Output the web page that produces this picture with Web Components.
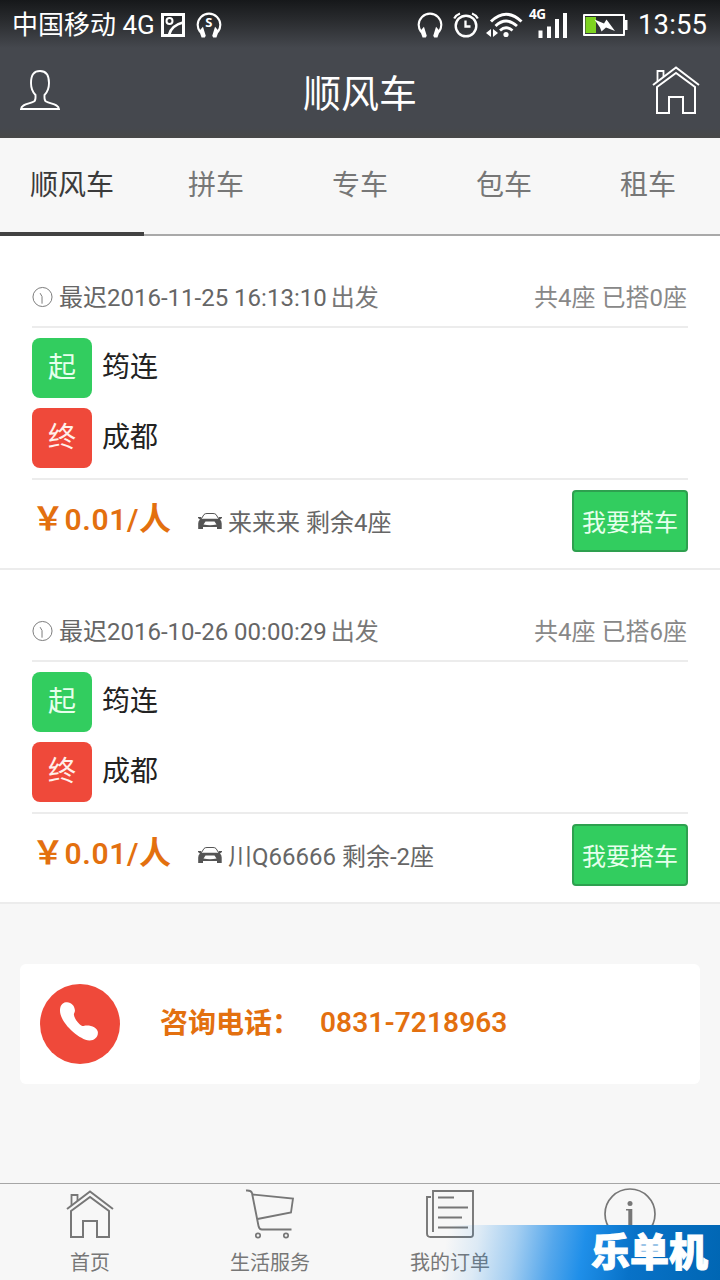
<!DOCTYPE html>
<html lang="zh-CN">
<head>
<meta charset="utf-8">
<title>顺风车</title>
<style>
  body {
    margin: 0;
    width: 720px;
    height: 1280px;
    overflow: hidden;
    font-family: Roboto, "Noto Sans CJK SC", sans-serif;
    background: #f7f7f7;
    color: #333;
  }
</style>
</head>
<body>
<ride-app></ride-app>

<script>
// [viewBox width, viewBox height, markup]
const ICONS = {
  picture: [24, 24, `<path d="M1.500 1.500h21v21h-21z" stroke-width="3"/><circle cx="8.500" cy="8" r="3" stroke-width="2"/><path d="M8 22Q10 12.500 22 9.500" stroke-width="2.800"/>`],
  headset: [28, 28, `<path d="M4.500 21.500C2.500 19 1.800 16.500 1.800 13.800a12.200 12 0 0 1 24.400 0c0 2.700-.7 5.200-2.700 7.700" stroke-width="2.300"/><path d="M3.500 20.500l4-4.500 3 9.500-1 2H6zM24.500 20.500l-4-4.500-3 9.500 1 2H22z" fill="currentColor" stroke="none"/>`],
  alarm: [26, 26, `<circle cx="13" cy="14" r="10.300" stroke-width="2.400"/><path d="M12.500 8.500v6h5" stroke-width="2.300"/><path d="M1.200 6.500Q3 3 7 1.500M24.800 6.500Q23 3 19 1.500" stroke-width="2.200"/>`],
  wifi: [37, 26, `<path d="M5 9.500Q20-5 35.500 9.500" stroke-width="3"/><path d="M9.500 14Q20 4 31 14M14 18.500q6-5.500 12.500 0" stroke-width="2.800"/><circle cx="20" cy="22.500" r="2.600" fill="currentColor" stroke="none"/><path d="M5 17v8L0 21zM7 17v8l5-4z" fill="currentColor" stroke="none"/>`],
  signal: [30, 26, `<path d="M2.500 18.500V26M11 14.500V26M19 7v19M27 1v25" stroke-width="4"/>`],
  battery: [46, 24, `<path d="M2 2h40v20H2z" stroke-width="2" stroke-linejoin="round"/><path d="M42.500 7h3v10h-3z" fill="currentColor" stroke="none"/><path d="M3.500 4H14v16H3.500z" fill="#7ed321" stroke="none"/><path d="M12.500 6.500l9.500 4 2.500-4L33 18l-9-3.500-4.500 4-1.500-4z" fill="currentColor" stroke="none"/>`],
  user: [40, 40, `<path d="M1 39C1.500 34 9 34 14 31.500c2-1 1.500-4 1.500-6.500-4-4-4.500-8-4.500-12C11 4.500 14 1 20 1s9 3.500 9 12c0 4-.5 8-4.500 12 0 2.500-.5 5.500 1.500 6.500C31 34 38.500 34 39 39z" stroke-width="1.900"/>`],
  home: [48, 50, `<path d="M1 20L24 2.500 47 20" stroke-width="2"/><path d="M5.500 16V6h6v6" stroke-width="1.800"/><path d="M5 22L24 8l19 14v26H31V32H17v16H5z" stroke-width="2"/>`],
  clock: [22, 22, `<circle cx="11" cy="11" r="10" stroke-width="1"/><path d="M8.500 7l2 3.500V18" stroke-width="1"/>`],
  car: [26, 18, `<path d="M4.500 6.500L7 2.500Q8 1.500 10 1.500h6q2 0 3 1l2.500 4" stroke-width="1"/><path d="M1 5h3l1 1.800h16L22 5h3v1l-2 1.500q1.700 1.500 1.700 4V17H20v-2H6v2H1.200v-5.500q0-2.500 1.700-4L1 6z" fill="currentColor" stroke="none"/><path d="M8.500 9.500h9l2 3q-6.500 1.500-13 0z" fill="#fff" stroke="none"/>`],
  phone: [40, 40, `<path d="M6 .3C11-.5 15 3.500 15.300 8.500c.2 2-1.300 3-1 4.500.2 3.500 4.500 9.500 8 11.300 1.500.7 2.700-.3 4.700-.3C33 23.800 38 26.500 38.800 30.500 39.500 36 35 39.800 30 39.500 19 38.500 0 21 0 9 0 4 2 1 6 .3z" fill="currentColor" stroke="none"/>`],
  cart: [52, 50, `<path d="M2 1.500q5-.5 6 2.500l6.500 33q.7 3.500 3.500 3.500h29.500" stroke-width="1.900"/><path d="M8.500 5.500L49 9.500l-2 14L13.500 30" stroke-width="1.800"/><circle cx="14" cy="46.500" r="2.200" stroke-width="1.700"/><circle cx="42" cy="46.500" r="2.200" stroke-width="1.700"/>`],
  orders: [50, 50, `<path d="M8 43V2h40v43.500q0 2.500-2.500 2.500h-40q-3.500 0-3.500-3.500V8h4" stroke-width="1.900"/><path d="M13 8.500h16M13 18.500h30M13 28.500h24M13 38.500h30" stroke-width="1.900"/>`],
  info: [52, 52, `<circle cx="26" cy="26" r="25" stroke-width="1.700"/><circle cx="26" cy="15.500" r="2.500" fill="currentColor" stroke="none"/><path d="M22 21h6.300v20h-4V22.500H22z" fill="currentColor" stroke="none"/>`]
};

class RideIcon extends HTMLElement {
  constructor() {
    super();
    this.attachShadow({ mode: "open" });
  }

  connectedCallback() {
    const [w, h, shapes] = ICONS[this.getAttribute("name")];
    this.shadowRoot.innerHTML = `
      <style>
        :host { display: block; flex: none; }
        svg { display: block; width: 100%; height: 100%; }
      </style>
      <svg viewBox="0 0 ${w} ${h}" fill="none" stroke="currentColor">${shapes}</svg>
    `;
  }
}

class StatusBar extends HTMLElement {
  connectedCallback() {
    this.attachShadow({ mode: "open" }).innerHTML = `
      <style>
        :host {
          display: flex;
          align-items: center;
          height: 50px;
          padding: 0 13px 0 12px;
          color: #fff;
          font-size: 26px;
          line-height: 52px;
        }
        .space { flex: 1; }
        ride-icon { width: 26px; height: 26px; }
        .music { display: grid; margin-left: 11px; }
        .music > * { grid-area: 1 / 1; }
        .music span { font: bold 13px/20px "Noto Sans", sans-serif; text-align: center; }
        .net { font: bold 13.500px/14px "Noto Sans", sans-serif; align-self: start; margin: 7px 0 0 6px; width: 18px; letter-spacing: -.4px; }
        .time { font-size: 27.500px; margin-left: 10px; line-height: 52px; letter-spacing: .1px; }
      </style>
      <span>中国移动 4G</span>
      <ride-icon name="picture" style="width:24px;height:24px;margin-left:6px"></ride-icon>
      <div class="music"><ride-icon name="headset"></ride-icon><span>S</span></div>
      <div class="space"></div>
      <ride-icon name="headset"></ride-icon>
      <ride-icon name="alarm" style="margin-left:10px"></ride-icon>
      <ride-icon name="wifi" style="width:37px;margin-left:7px"></ride-icon>
      <span class="net">4G</span>
      <ride-icon name="signal" style="width:30px;margin-left:-9px"></ride-icon>
      <ride-icon name="battery" style="width:46px;height:24px;margin-left:14px"></ride-icon>
      <span class="time">13:55</span>
    `;
  }
}

class TitleBar extends HTMLElement {
  connectedCallback() {
    this.attachShadow({ mode: "open" }).innerHTML = `
      <style>
        :host {
          display: flex;
          align-items: center;
          justify-content: space-between;
          height: 88px;
          padding: 0 20px;
          box-sizing: border-box;
          color: #fff;
        }
        h1 { margin: 0; font-size: 38px; font-weight: 400; line-height: 84px; }
        .user { width: 40px; height: 40px; margin: -8px 8px 0 0; }
        .home { width: 48px; height: 50px; margin-top: -9px; }
      </style>
      <ride-icon class="user" name="user"></ride-icon>
      <h1><slot></slot></h1>
      <ride-icon class="home" name="home"></ride-icon>
    `;
  }
}

class RideTabs extends HTMLElement {
  connectedCallback() {
    const tabs = this.getAttribute("items").split(",");
    this.attachShadow({ mode: "open" }).innerHTML = `
      <style>
        :host {
          display: grid;
          grid-template-columns: repeat(5, 1fr);
          height: 98px;
          background: #f7f7f7;
        }
        span {
          box-sizing: border-box;
          border-bottom: 2px solid #a9a9a9;
          color: #777;
          font-size: 28px;
          line-height: 95px;
          height: 98px;
          text-align: center;
        }
        .active { color: #3b3b3b; border-bottom: 4px solid #424242; }
      </style>
      ${tabs.map((t, i) => `<span class="${i === 0 ? "active" : ""}">${t}</span>`).join("")}
    `;
  }
}

class RideCard extends HTMLElement {
  connectedCallback() {
    const get = (name) => this.getAttribute(name);
    this.attachShadow({ mode: "open" }).innerHTML = `
      <style>
        :host {
          display: block;
          height: 334px;
          box-sizing: border-box;
          padding: 30px 32px 0;
          background: #fff;
          border-bottom: 2px solid #ececec;
        }
        .head {
          display: flex;
          align-items: center;
          height: 62px;
          box-sizing: border-box;
          padding: 4px 1px 0 0;
          border-bottom: 2px solid #ececec;
          font-size: 24px;
          line-height: 56px;
          color: #666;
        }
        .head ride-icon { width: 21px; height: 22px; margin: -3px 6px 0 0; color: #777; }
        .head .go { margin-left: 4px; color: #777; flex: 1; }
        .head .seats { color: #888; }
        .route {
          display: grid;
          gap: 10px;
          padding: 10px 0;
          border-bottom: 2px solid #ececec;
          font-size: 28px;
          line-height: 60px;
          color: #222;
        }
        .route div { display: flex; gap: 10px; height: 60px; }
        .route b {
          width: 60px;
          height: 60px;
          border-radius: 8px;
          background: #32cd5f;
          color: #e6ffec;
          font-weight: 400;
          text-align: center;
        }
        .route .end b { background: #ef493a; color: #fff0ea; }
        .foot { display: flex; align-items: center; height: 82px; }
        .price {
          width: 165px;
          font-size: 30px;
          font-weight: 600;
          line-height: 76px;
          padding-bottom: 4px;
          color: #e3700f;
          letter-spacing: .6px;
          white-space: nowrap;
        }
        .price i { font-style: normal; font-size: 32px; }
        .car { width: 26px; height: 18px; margin-right: 5px; color: #555; }
        .driver { flex: 1; font-size: 24px; line-height: 78px; padding-top: 4px; color: #666; }
        button {
          width: 116px;
          height: 62px;
          padding: 4px 0 0;
          border: 2px solid #2ea04f;
          border-radius: 4px;
          background: #32cd5f;
          color: #e6ffec;
          font: inherit;
          font-size: 24px;
          line-height: 54px;
        }
      </style>
      <div class="head">
        <ride-icon name="clock"></ride-icon>
        <span>最迟${get("time")}</span><span class="go">出发</span>
        <span class="seats">共${get("seats")}座 已搭${get("taken")}座</span>
      </div>
      <div class="route">
        <div><b>起</b><span>${get("from")}</span></div>
        <div class="end"><b>终</b><span>${get("to")}</span></div>
      </div>
      <div class="foot">
        <span class="price"><i>￥</i>${get("price")}/<i>人</i></span>
        <ride-icon class="car" name="car"></ride-icon>
        <span class="driver">${get("driver")} 剩余${get("left")}座</span>
        <button>我要搭车</button>
      </div>
    `;
  }
}

class ContactCard extends HTMLElement {
  connectedCallback() {
    this.attachShadow({ mode: "open" }).innerHTML = `
      <style>
        :host {
          display: flex;
          align-items: center;
          height: 120px;
          box-sizing: border-box;
          margin: 60px 20px 0;
          padding: 0 20px;
          border-radius: 6px;
          background: #fff;
          color: #e3700f;
          font-size: 28px;
          font-weight: 600;
          line-height: 116px;
        }
        .badge {
          display: grid;
          place-items: center;
          width: 80px;
          height: 80px;
          margin-right: 40px;
          border-radius: 50%;
          background: #ef493a;
          color: #fff;
        }
        .badge ride-icon { width: 39px; height: 39px; margin: -6px 0 0 -1px; }
        .label { width: 160px; white-space: nowrap; }
        .number { letter-spacing: .1px; margin-top: -2px; }
      </style>
      <div class="badge"><ride-icon name="phone"></ride-icon></div>
      <span class="label">咨询电话：</span>
      <span class="number"><slot></slot></span>
    `;
  }
}

class BottomNav extends HTMLElement {
  connectedCallback() {
    const items = [["home", "首页", 48, 50], ["cart", "生活服务", 52, 50], ["orders", "我的订单", 50, 50]];
    this.attachShadow({ mode: "open" }).innerHTML = `
      <style>
        :host {
          display: grid;
          grid-template-columns: repeat(4, 1fr);
          height: 97px;
          box-sizing: border-box;
          border-top: 1px solid #a6a6a6;
          background: #f7f7f7;
          color: #777;
        }
        div { display: flex; flex-direction: column; align-items: center; padding-top: 5px; }
        span { font-size: 20px; line-height: 28px; height: 28px; margin-top: auto; padding-bottom: 3px; }
      </style>
      ${items.map(([icon, text, w, h]) => `
        <div><ride-icon name="${icon}" style="width:${w}px;height:${h}px"></ride-icon><span>${text}</span></div>
      `).join("")}
      <div style="padding-top:4px"><ride-icon name="info" style="width:52px;height:52px"></ride-icon></div>
    `;
  }
}

// corner logo laid over the bottom navigation
class SiteMark extends HTMLElement {
  connectedCallback() {
    this.attachShadow({ mode: "open" }).innerHTML = `
      <style>
        :host {
          position: absolute;
          right: 0;
          bottom: 0;
          display: block;
          width: 280px;
          height: 55px;
          box-sizing: border-box;
          padding-right: 12px;
          background: linear-gradient(100deg, rgba(30, 140, 232, 0) 3%, rgba(30, 140, 232, .12) 14%, rgba(30, 140, 232, .38) 27%, rgba(30, 140, 232, .75) 40%, #1f8fe9 51%, #0872c8 68%, #0066b3 100%);
          color: #fff;
          font-size: 39px;
          font-weight: 900;
          line-height: 57px;
          text-align: right;
          -webkit-text-stroke: 1px #fff;
        }
      </style>
      <slot></slot>
    `;
  }
}

class RideApp extends HTMLElement {
  connectedCallback() {
    this.attachShadow({ mode: "open" }).innerHTML = `
      <style>
        :host {
          display: flex;
          flex-direction: column;
          position: relative;
          width: 720px;
          height: 1280px;
        }
        header { background: linear-gradient(#16181a, #292b2e 20px, #45484e 48px, #45484e 128px, #484848 138px); }
        bottom-nav { margin-top: auto; }
      </style>
      <header>
        <status-bar></status-bar>
        <title-bar>顺风车</title-bar>
      </header>
      <ride-tabs items="顺风车,拼车,专车,包车,租车"></ride-tabs>
      <ride-card time="2016-11-25 16:13:10" seats="4" taken="0" from="筠连" to="成都" price="0.01" driver="来来来" left="4"></ride-card>
      <ride-card time="2016-10-26 00:00:29" seats="4" taken="6" from="筠连" to="成都" price="0.01" driver="川Q66666" left="-2"></ride-card>
      <contact-card>0831-7218963</contact-card>
      <bottom-nav></bottom-nav>
      <site-mark>乐单机</site-mark>
    `;
  }
}

customElements.define("ride-icon", RideIcon);
customElements.define("status-bar", StatusBar);
customElements.define("title-bar", TitleBar);
customElements.define("ride-tabs", RideTabs);
customElements.define("ride-card", RideCard);
customElements.define("contact-card", ContactCard);
customElements.define("bottom-nav", BottomNav);
customElements.define("site-mark", SiteMark);
customElements.define("ride-app", RideApp);
</script>
</body>
</html>
